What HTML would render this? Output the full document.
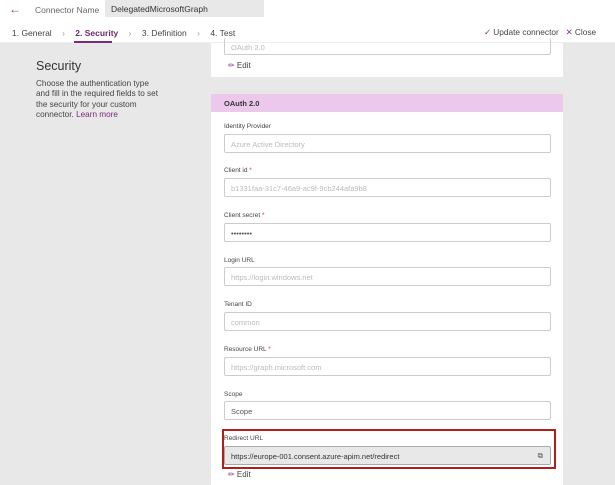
<!DOCTYPE html>
<html><head><style>
*{margin:0;padding:0;box-sizing:border-box}
body{width:615px;height:485px;overflow:hidden;background:#e8e8e8;font-family:"Liberation Sans",sans-serif;position:relative;color:#333}
.a{position:absolute}
.lbl{position:absolute;left:224px;font-size:6.5px;color:#444}
.inp{position:absolute;left:224px;width:327px;height:19px;border:1px solid #ccc;border-radius:2px;background:#fff;font-size:7.5px;color:#bbb;padding:5px 6px;white-space:nowrap}
.req{color:#d13438}
</style></head><body>
<div class="a" style="left:0;top:0;width:615px;height:43px;background:#fff;border-bottom:1px solid #eee"></div>
<div class="a" style="left:9px;top:2px;font-size:12px;color:#8a3a8a">&#8592;</div>
<div class="a" style="left:35px;top:5px;font-size:8.5px;color:#666">Connector Name</div>
<div class="a" style="left:105px;top:0;width:159px;height:17px;background:#e8e8e8;font-size:8.5px;color:#333;padding:4px 6px">DelegatedMicrosoftGraph</div>
<div class="a" style="top:28px;left:12px;font-size:8.5px;color:#444;white-space:nowrap">1. General <span style="color:#999;margin:0 8px">&#x203A;</span> <span style="color:#6b2a6b;font-weight:bold">2. Security</span> <span style="color:#999;margin:0 8px">&#x203A;</span> 3. Definition <span style="color:#999;margin:0 8px">&#x203A;</span> 4. Test</div>
<div class="a" style="left:74px;top:41px;width:38px;height:2px;background:#7a2a7a"></div>
<div class="a" style="top:27px;left:484px;font-size:8.3px;color:#444"><span style="color:#8a3a8a">&#10003;</span> Update connector &nbsp;&nbsp;<span style="color:#8a3a8a">&#10005;</span> Close</div>
<div class="a" style="left:36px;top:59px;font-size:12.5px;color:#333">Security</div>
<div class="a" style="left:36px;top:79px;font-size:8.2px;line-height:10.3px;color:#444;white-space:nowrap">Choose the authentication type<br>and fill in the required fields to set<br>the security for your custom<br>connector. <span style="color:#7a2a7a">Learn more</span></div>
<div class="a" style="left:211px;top:43px;width:352px;height:34px;background:#fff"></div>
<div class="a" style="left:211px;top:94px;width:352px;height:391px;background:#fff"></div>
<div class="a" style="left:224px;top:38px;width:327px;height:17px;border:1px solid #ccc;border-top:none;border-radius:2px;font-size:7.5px;color:#bbb;padding:5px 6px">OAuth 2.0</div>
<div class="a" style="left:228px;top:61px;font-size:8px;color:#444"><span style="color:#8a3a8a">&#9999;</span> Edit</div>
<div class="a" style="left:211px;top:94px;width:352px;height:18px;background:#ecc9ec;font-size:7.5px;font-weight:bold;color:#333;padding:5px 13px">OAuth 2.0</div>
<div class="lbl" style="top:123px">Identity Provider</div><div class="inp" style="top:134px">Azure Active Directory</div>
<div class="lbl" style="top:167px">Client id <span class="req">*</span></div><div class="inp" style="top:178px">b1331faa-31c7-46a9-ac9f-9cb244afa9b8</div>
<div class="lbl" style="top:212px">Client secret <span class="req">*</span></div><div class="inp" style="top:223px;color:#555">&#8226;&#8226;&#8226;&#8226;&#8226;&#8226;&#8226;&#8226;</div>
<div class="lbl" style="top:257px">Login URL</div><div class="inp" style="top:267px">https://login.windows.net</div>
<div class="lbl" style="top:301px">Tenant ID</div><div class="inp" style="top:312px">common</div>
<div class="lbl" style="top:346px">Resource URL <span class="req">*</span></div><div class="inp" style="top:357px">https://graph.microsoft.com</div>
<div class="lbl" style="top:391px">Scope</div><div class="inp" style="top:401px;color:#555">Scope</div>
<div class="a" style="left:222px;top:429px;width:334px;height:40px;border:2px solid #b0201a"></div>
<div class="lbl" style="top:435px">Redirect URL</div>
<div class="inp" style="top:446px;background:#e8e8e8;border-color:#aaa;color:#333">https://europe-001.consent.azure-apim.net/redirect<span style="position:absolute;right:7px;top:4px;color:#555">&#10697;</span></div>
<div class="a" style="left:228px;top:470px;font-size:8px;color:#444"><span style="color:#8a3a8a">&#9999;</span> Edit</div>
</body></html>
